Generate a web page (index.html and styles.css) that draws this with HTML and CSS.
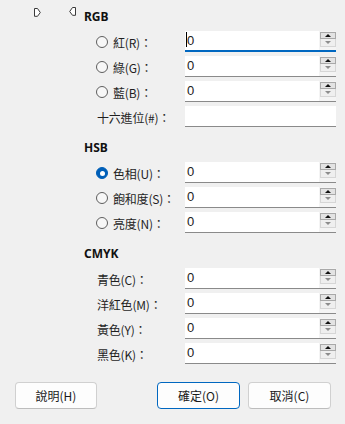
FILE: index.html
```html
<!DOCTYPE html>
<html lang="zh-Hant">
<head>
<meta charset="utf-8">
<link rel="stylesheet" href="styles.css">
</head>
<body>
<div class="dialog">
  <svg class="marker marker-left" width="7" height="9" viewBox="0 0 7 9"><path d="M0.5 0.5 H3.5 L6.3 4.5 L3.5 8.3 H0.5 Z" fill="#fff" stroke="#3a3a3a" stroke-width="1"/></svg>
  <svg class="marker marker-right" width="7" height="9" viewBox="0 0 7 9"><path d="M6.5 0.5 H3.5 L0.7 4.5 L3.5 8.3 H6.5 Z" fill="#fff" stroke="#3a3a3a" stroke-width="1"/></svg>

  <div class="panel">
    <section class="group">
      <h2 class="heading">RGB</h2>
      <div class="row">
        <label class="label"><span class="radio"></span>紅(R)：</label>
        <div class="field focused"><span class="value"><span class="caret"></span>0</span><span class="spin"><span class="up"></span><span class="down"></span></span></div>
      </div>
      <div class="row">
        <label class="label"><span class="radio"></span>綠(G)：</label>
        <div class="field"><span class="value">0</span><span class="spin"><span class="up"></span><span class="down"></span></span></div>
      </div>
      <div class="row">
        <label class="label"><span class="radio"></span>藍(B)：</label>
        <div class="field"><span class="value">0</span><span class="spin"><span class="up"></span><span class="down"></span></span></div>
      </div>
      <div class="row">
        <label class="label plain">十六進位(#)：</label>
        <div class="field"><span class="value"></span></div>
      </div>
    </section>

    <section class="group">
      <h2 class="heading">HSB</h2>
      <div class="row">
        <label class="label"><span class="radio on"></span>色相(U)：</label>
        <div class="field"><span class="value">0</span><span class="spin"><span class="up"></span><span class="down"></span></span></div>
      </div>
      <div class="row">
        <label class="label"><span class="radio"></span>飽和度(S)：</label>
        <div class="field"><span class="value">0</span><span class="spin"><span class="up"></span><span class="down"></span></span></div>
      </div>
      <div class="row">
        <label class="label"><span class="radio"></span>亮度(N)：</label>
        <div class="field"><span class="value">0</span><span class="spin"><span class="up"></span><span class="down"></span></span></div>
      </div>
    </section>

    <section class="group">
      <h2 class="heading">CMYK</h2>
      <div class="row">
        <label class="label plain">青色(C)：</label>
        <div class="field"><span class="value">0</span><span class="spin"><span class="up"></span><span class="down"></span></span></div>
      </div>
      <div class="row">
        <label class="label plain">洋紅色(M)：</label>
        <div class="field"><span class="value">0</span><span class="spin"><span class="up"></span><span class="down"></span></span></div>
      </div>
      <div class="row">
        <label class="label plain">黃色(Y)：</label>
        <div class="field"><span class="value">0</span><span class="spin"><span class="up"></span><span class="down"></span></span></div>
      </div>
      <div class="row">
        <label class="label plain">黑色(K)：</label>
        <div class="field"><span class="value">0</span><span class="spin"><span class="up"></span><span class="down"></span></span></div>
      </div>
    </section>
  </div>

  <div class="footer">
    <button class="btn help">說明(H)</button>
    <span class="spacer"></span>
    <button class="btn ok">確定(O)</button>
    <button class="btn cancel">取消(C)</button>
  </div>
</div>
</body>
</html>
```

FILE: styles.css
```css
* { box-sizing: border-box; }
html, body {
  margin: 0;
  padding: 0;
  background: #f0f0f0;
}
body {
  width: 345px;
  height: 424px;
  overflow: hidden;
  font-family: "Noto Sans", "Noto Sans CJK TC", sans-serif;
  font-size: 12px;
  color: #1a1a1a;
}
.dialog {
  position: relative;
  width: 345px;
  height: 424px;
}
.marker {
  position: absolute;
  display: block;
}
.marker-left { left: 34px; top: 8px; }
.marker-right { left: 69px; top: 7px; }

.panel {
  padding: 7px 9px 0 84px;
  display: flex;
  flex-direction: column;
  gap: 11px;
}
.group {
  display: flex;
  flex-direction: column;
  gap: 4px;
}
.heading {
  margin: 0;
  height: 20px;
  line-height: 20px;
  font-size: 12px;
  font-weight: 700;
  color: #111;
}
.row {
  display: grid;
  grid-template-columns: 101px 151px;
  height: 21px;
}
.row + .row { margin-top: 0; }
.group .row ~ .row { }
.label {
  display: flex;
  align-items: center;
  padding-left: 12px;
  padding-top: 2px;
  font-family: "Noto Sans CJK TC", sans-serif;
  font-size: 12px;
  color: #1f1f1f;
  white-space: nowrap;
  letter-spacing: -0.2px;
}
.label.plain { padding-left: 13px; }
.radio {
  width: 12px;
  height: 12px;
  border-radius: 50%;
  border: 1px solid #5e5e5e;
  background: #f7f7f7;
  margin-right: 5px;
  margin-top: -1px;
  position: relative;
  flex: none;
}
.radio.on {
  background: #005fb8;
  border-color: #005fb8;
}
.radio.on::after {
  content: "";
  position: absolute;
  left: 2.5px;
  top: 2.5px;
  width: 5px;
  height: 5px;
  border-radius: 50%;
  background: #fff;
}
.field {
  display: flex;
  height: 21px;
  background: #fff;
  border-bottom: 1px solid #8a8a8a;
}
.field.focused { border-bottom: 2px solid #0067c0; }
.value {
  flex: 1;
  position: relative;
  padding-left: 2px;
  line-height: 20px;
  font-family: "Liberation Sans", sans-serif;
  font-size: 13px;
  color: #222;
}
.caret {
  position: absolute;
  left: 1px;
  top: 1px;
  width: 1px;
  height: 15px;
  background: #000;
}
.spin {
  width: 17px;
  background: #f4f4f4;
  display: flex;
  flex-direction: column;
  align-items: center;
  padding-top: 1px;
}
.up, .down {
  width: 16px;
  height: 7px;
  position: relative;
}
.up {
  background: #e3e3e3;
  border: 1px solid #a9a9a9;
}
.down {
  height: 8px;
  background: #efefef;
  border: 1px solid #d6d6d6;
  border-top: none;
}
.up::after, .down::after {
  content: "";
  position: absolute;
  left: 50%;
  margin-left: -3px;
  width: 0;
  height: 0;
  border-left: 3px solid transparent;
  border-right: 3px solid transparent;
}
.up::after {
  top: 1px;
  border-bottom: 3px solid #111;
}
.down::after {
  top: 2px;
  border-top: 3px solid #8c8c8c;
}

.footer {
  display: flex;
  gap: 8px;
  padding: 0 14px 0 15px;
  margin-top: 18px;
}
.spacer { flex: 1; margin-left: -8px; }
.btn {
  height: 27px;
  width: 83px;
  border: 1px solid #d0d0d0;
  border-bottom-color: #bdbdbd;
  border-radius: 4px;
  background: #fdfdfd;
  font-family: "Noto Sans CJK TC", sans-serif;
  font-size: 12px;
  color: #1a1a1a;
  padding: 0;
}
.btn.help { width: 82px; }
.btn.ok {
  border: 1px solid #0067c0;
}
```
